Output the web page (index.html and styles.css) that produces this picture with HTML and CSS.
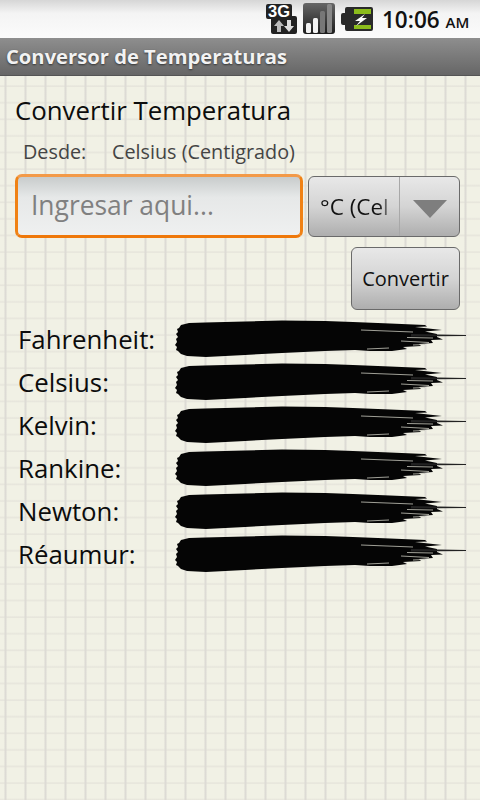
FILE: index.html
```html
<!DOCTYPE html>
<html lang="en">

<head>
  <meta charset="UTF-8">
  <title>Conversor de Temperaturas</title>
  <link rel="stylesheet" href="styles.css">
</head>

<body>
  <svg class="defs" width="0" height="0">
    <symbol id="brush" viewBox="0 0 291 37" overflow="visible">
      <path fill="#050505" d="M6 4 L14 2 L30 1.5 L70 0.5 L107 -0.5 L150 0 L178 1 L215 2.5 L250 4 L252 5.5 L240 6 L267 9 L250 10.5 L262 13 L262 16 L268 18.5 L256 19 L258 22 L244 23 L246 25 L228 26 L232 28 L217 30 L195 30 L180 29 L150 30 L107 32 L70 34 L31 36 L12 35 L6 33 L3 30 L1 29 L2 26 L0 24 L2 21 L1 18 L3 16 L1 13 L3 11 L2 8 L4 7 Z"/>
      <path fill="#222" d="M236 13 L291 14 L291 15 L236 15.5 Z"/>
      <path stroke="#c8c8bc" stroke-width="0.8" fill="none" d="M186 9 L238 11 M192 28 L214 27 M226 20 L254 21.5 M232 16.5 L258 17 M238 24 L250 23.5"/>
    </symbol>
  </svg>

  <div class="statusbar">
    <svg class="icon-3g" width="32" height="31" viewBox="0 0 32 31">
      <path fill="#222" d="M2 0 H24 Q26 0 26 2 V12 H29 Q31 12 31 14 V28 Q31 30 29 30 H7 Q5 30 5 28 V15 H2 Q0 15 0 13 V2 Q0 0 2 0 Z"/>
      <text x="2" y="13" textLength="22" lengthAdjust="spacingAndGlyphs" class="icon-3g-text">3G</text>
      <path fill="#bbb" d="M13 16 L18 22 H15 V28 H11 V22 H8 Z"/>
      <path fill="#ddd" d="M23 28 L28 22 H25 V16 H21 V22 H18 Z"/>
    </svg>
    <svg class="icon-signal" width="32" height="32" viewBox="0 0 32 32">
      <defs>
        <linearGradient id="signal-bg" x1="0" y1="0" x2="0" y2="1">
          <stop offset="0" stop-color="#666"/>
          <stop offset="1" stop-color="#1c1c1c"/>
        </linearGradient>
      </defs>
      <rect width="32" height="31" rx="3" fill="url(#signal-bg)"/>
      <rect x="3" y="20" width="5" height="10" rx="1.5" fill="#f2f2f2"/>
      <rect x="10" y="15" width="5" height="15" rx="1.5" fill="#f2f2f2"/>
      <rect x="17" y="8" width="5" height="22" rx="1.5" fill="#777"/>
      <rect x="24" y="1" width="5" height="29" rx="1.5" fill="#888"/>
    </svg>
    <svg class="icon-battery" width="32" height="25" viewBox="0 0 32 25">
      <path fill="#2a2a2a" d="M6 0 H30 Q32 0 32 2 V22 Q32 24 30 24 H6 Q4 24 4 22 V18 H2 Q0 18 0 16 V8 Q0 6 2 6 H4 V2 Q4 0 6 0 Z"/>
      <path fill="#8cbc1c" d="M13 2 H30 V7 H13 Z M13 18 H30 V22 H13 Z"/>
      <path fill="#fff" d="M24 7 L14 14 H19 L15 19 L26 11 H21 Z"/>
    </svg>
    <span class="clock">10:06 <small>AM</small></span>
  </div>

  <div class="titlebar">Conversor de Temperaturas</div>

  <div class="content">
    <h1>Convertir Temperatura</h1>
    <div class="from">
      <span class="from-label">Desde:</span>
      <span>Celsius (Centigrado)</span>
    </div>

    <div class="input-row">
      <div class="textfield">Ingresar aqui...</div>
      <div class="spinner">
        <div class="spinner-value"><span>°C (Cel</span></div>
        <div class="spinner-arrow"></div>
      </div>
    </div>

    <div class="button-row">
      <div class="button">Convertir</div>
    </div>

    <div class="results">
      <div class="result"><span>Fahrenheit:</span><svg class="brush"><use href="#brush"/></svg></div>
      <div class="result"><span>Celsius:</span><svg class="brush"><use href="#brush"/></svg></div>
      <div class="result"><span>Kelvin:</span><svg class="brush"><use href="#brush"/></svg></div>
      <div class="result"><span>Rankine:</span><svg class="brush"><use href="#brush"/></svg></div>
      <div class="result"><span>Newton:</span><svg class="brush"><use href="#brush"/></svg></div>
      <div class="result"><span>Réaumur:</span><svg class="brush"><use href="#brush"/></svg></div>
    </div>
  </div>
</body>

</html>
```

FILE: styles.css
```css
html, body {
  margin: 0;
  height: 100%;
}
body {
  display: flex;
  flex-direction: column;
  overflow: hidden;
  font-family: "Open Sans", "Noto Sans", sans-serif;
  color: #111;
}
.defs {
  position: absolute;
}
.statusbar {
  height: 38px;
  flex-shrink: 0;
  display: flex;
  align-items: center;
  box-sizing: border-box;
  padding: 0 10px 0 266px;
  background: linear-gradient(#d6d6d6, #f4f4f4 35%, #fbfbfb);
}
.icon-3g-text {
  font-family: "Liberation Sans", sans-serif;
  font-size: 16px;
  font-weight: 700;
  fill: #fff;
}
.icon-signal {
  margin-left: 5px;
}
.icon-battery {
  margin-left: 6px;
}
.clock {
  margin-left: 9px;
  font-size: 22.5px;
  font-weight: 600;
  white-space: nowrap;
  color: #111;
}
.clock small {
  font-size: 15px;
}
.titlebar {
  height: 38px;
  flex-shrink: 0;
  box-sizing: border-box;
  padding-left: 6px;
  line-height: 37px;
  font-size: 20.2px;
  font-weight: 700;
  color: #f2f2f2;
  text-shadow: 0 1px 2px #333;
  background: linear-gradient(#8e8e8e, #666);
  border-bottom: 1px solid #555;
}
/* graph paper */
.content {
  flex-grow: 1;
  padding: 17px 20px 0 15px;
  background-color: #f1f1e5;
  background-image:
    linear-gradient(90deg, transparent, #dddbd5 1px, #dddbd5 2px, transparent 3px),
    linear-gradient(transparent, #e2e0d8 1px, transparent 2.5px);
  background-size: 20px 100%, 100% 16.6px;
  background-position: 4px 0, 0 9px;
}
h1 {
  margin: 0;
  font-size: 25.8px;
  font-weight: 400;
  line-height: 34px;
  color: #0c0c0c;
}
.from {
  display: flex;
  margin: 11px 0 0 8px;
  font-size: 19.8px;
  line-height: 28px;
  color: #444;
}
.from-label {
  width: 89px;
}
.input-row {
  display: flex;
  gap: 5px;
  margin-top: 8px;
}
.textfield {
  width: 288px;
  height: 64px;
  box-sizing: border-box;
  padding-left: 13px;
  line-height: 56px;
  font-size: 26.4px;
  color: #808080;
  border: 3px solid #f08214;
  border-top-color: #f39a48;
  border-bottom-color: #ef780a;
  border-radius: 7px;
  background: linear-gradient(#c8cccc, #e6e8e8 35%, #eff0f0);
}
.spinner, .button {
  box-sizing: border-box;
  border: 1px solid #6a6a6a;
  border-radius: 6px;
  background: linear-gradient(#e8e8e8, #d4d4d4 50%, #aeaeae);
}
.spinner {
  display: flex;
  width: 152px;
  height: 61px;
  margin-top: 2px;
}
.spinner-value {
  width: 91px;
  box-sizing: border-box;
  border-right: 1px solid #a8a8a8;
  padding-left: 11px;
  font-size: 22.5px;
  line-height: 60px;
  white-space: nowrap;
}
.spinner-value span {
  display: block;
  -webkit-mask-image: linear-gradient(90deg, #000 74%, transparent 96%);
  mask-image: linear-gradient(90deg, #000 74%, transparent 96%);
}
.spinner-arrow {
  width: 0;
  height: 0;
  margin: 23px 0 0 13px;
  border-left: 17px solid transparent;
  border-right: 17px solid transparent;
  border-top: 18px solid #7e7e7e;
}
.button-row {
  display: flex;
  justify-content: flex-end;
  margin-top: 9px;
}
.button {
  width: 109px;
  height: 63px;
  line-height: 62px;
  text-align: center;
  font-size: 20px;
}
.results {
  margin: 7px -20px 0 0;
  padding-left: 3px;
}
.result {
  display: flex;
  align-items: center;
  height: 43px;
  font-size: 25.8px;
  color: #0c0c0c;
}
.result span {
  width: 157px;
}
.brush {
  flex-shrink: 0;
  width: 291px;
  height: 37px;
  margin-top: 1px;
  overflow: visible;
  filter: blur(0.5px);
}
```
